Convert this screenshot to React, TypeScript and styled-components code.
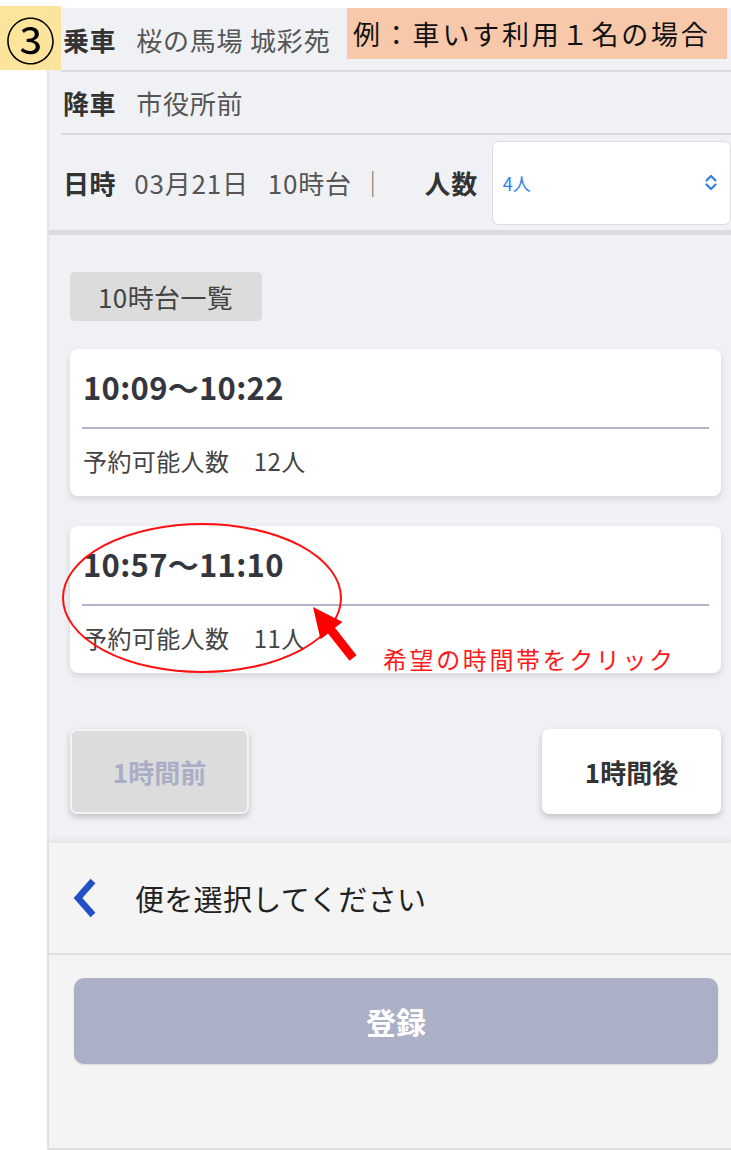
import styled, { createGlobalStyle } from "styled-components";

const GlobalStyle = createGlobalStyle`
  body {
    margin: 0;
    background: #fff;
    font-family: "Noto Sans CJK JP", "Noto Sans", sans-serif;
  }
`;

const Page = styled.div`
  position: relative;
  width: 731px;
  height: 1150px;
  overflow: hidden;
  background: #fff;
`;

const Phone = styled.div`
  margin: 8px 0 0 47px;
  height: 1142px;
  display: flex;
  flex-direction: column;
  border-left: 2px solid #e4e4e6;
  box-sizing: border-box;
`;

const Header = styled.div`
  background: #f0f1f5;
  border-bottom: 5px solid #dcdcdf;
`;

const InfoRow = styled.div<{ $height: number; $divider?: boolean }>`
  display: flex;
  align-items: center;
  height: ${(p) => p.$height}px;
  margin-left: 12px;
  padding-left: 2px;
  border-bottom: ${(p) => (p.$divider ? "2px solid #d9d9de" : "none")};
`;

const Label = styled.span<{ $gap?: number }>`
  font-size: 26px;
  letter-spacing: 0.6px;
  font-weight: 700;
  color: #333;
  margin-left: ${(p) => p.$gap ?? 0}px;
  white-space: nowrap;
`;

const Value = styled.span<{ $gap?: number; $muted?: boolean }>`
  font-size: 26px;
  letter-spacing: 0.8px;
  color: ${(p) => (p.$muted ? "#777" : "#555")};
  margin-left: ${(p) => p.$gap ?? 0}px;
  white-space: nowrap;
`;

const SelectBox = styled.div`
  margin-left: 14px;
  width: 239px;
  height: 84px;
  box-sizing: border-box;
  display: flex;
  align-items: center;
  justify-content: space-between;
  padding: 0 12px 0 10px;
  background: #fff;
  border: 1.5px solid #dcdcdf;
  border-radius: 7px;
  color: #2f7fe8;
  font-size: 18px;
`;

const Content = styled.div`
  background: #f0f1f5;
  padding: 37px 10px 29px 21px;
  display: flex;
  flex-direction: column;
`;

const Chip = styled.div`
  width: 192px;
  height: 49px;
  box-sizing: border-box;
  padding-left: 28px;
  display: flex;
  align-items: center;
  background: #dcdcdc;
  border-radius: 5px;
  color: #444;
  font-size: 26px;
  letter-spacing: 0.4px;
`;

const SlotList = styled.div`
  margin-top: 28px;
  display: flex;
  flex-direction: column;
  gap: 30px;
`;

const SlotCard = styled.div`
  background: #fff;
  border-radius: 8px;
  box-shadow: 0 3px 7px rgba(0, 0, 0, 0.12);
  padding: 0 12px;
`;

const SlotTime = styled.div`
  padding: 20px 0 22px 1px;
  line-height: 36px;
  font-size: 31px;
  letter-spacing: 0.3px;
  font-weight: 700;
  color: #33363d;
  border-bottom: 2px solid #b3b4cb;
`;

const SlotSeats = styled.div`
  padding: 17px 0 20px 1px;
  line-height: 30px;
  font-size: 24px;
  letter-spacing: 0.4px;
  color: #444;
`;

const PagerRow = styled.div`
  margin-top: 56px;
  display: flex;
  justify-content: space-between;
`;

const PagerButton = styled.div<{ $disabled?: boolean }>`
  width: 179px;
  height: 85px;
  box-sizing: border-box;
  display: flex;
  align-items: center;
  justify-content: center;
  border-radius: 7px;
  font-size: 26px;
  font-weight: 700;
  background: ${(p) => (p.$disabled ? "#dcdcdc" : "#fff")};
  color: ${(p) => (p.$disabled ? "#a9aec6" : "#333")};
  border: ${(p) => (p.$disabled ? "2px solid #f4f4f4" : "none")};
  box-shadow: 0 3px 6px rgba(0, 0, 0, 0.2);
`;

const Sheet = styled.div`
  flex: 1;
  background: #f4f4f4;
  box-shadow: 0 -4px 6px rgba(0, 0, 0, 0.05);
  border-bottom: 2px solid #dedede;
  display: flex;
  flex-direction: column;
`;

const NavRow = styled.div`
  height: 110px;
  display: flex;
  align-items: center;
  gap: 38px;
  padding-left: 22px;
  border-bottom: 2px solid #e0e0e0;
`;

const NavTitle = styled.span`
  font-size: 29px;
  letter-spacing: 0.3px;
  color: #222;
`;

const SubmitButton = styled.div`
  margin: 23px 13px 0 25px;
  height: 86px;
  display: flex;
  align-items: center;
  justify-content: center;
  background: #abb0c6;
  border-radius: 10px;
  box-shadow: 0 1px 2px rgba(0, 0, 0, 0.12);
  color: #fff;
  font-size: 30px;
  font-weight: 700;
`;

const StepBadge = styled.div`
  position: absolute;
  left: 0;
  top: 6px;
  width: 61px;
  height: 64px;
  display: flex;
  align-items: center;
  justify-content: center;
  background: #fde49c;
  color: #000;
  font-size: 50px;
  line-height: 1;
`;

const ExampleNote = styled.div`
  position: absolute;
  left: 347px;
  top: 8px;
  width: 380px;
  height: 51px;
  box-sizing: border-box;
  padding-left: 6px;
  display: flex;
  align-items: center;
  background: #f7c9aa;
  color: #111;
  font-size: 27px;
  letter-spacing: 2.8px;
  white-space: nowrap;
`;

const HintText = styled.div`
  position: absolute;
  left: 383px;
  top: 641px;
  color: #ff1a1a;
  font-size: 24px;
  letter-spacing: 2.6px;
  white-space: nowrap;
`;

const Overlay = styled.svg`
  position: absolute;
  left: 0;
  top: 0;
  pointer-events: none;
`;

const UpDownIcon = () => (
  <svg width="14" height="17" viewBox="0 0 14 17" fill="none" stroke="#2f7fe8" strokeWidth="2.2" strokeLinecap="round" strokeLinejoin="round">
    <path d="M2.5 6.5 L7 2 L11.5 6.5" />
    <path d="M2.5 10.5 L7 15 L11.5 10.5" />
  </svg>
);

const BackIcon = () => (
  <svg width="26" height="40" viewBox="0 0 26 40" fill="none" stroke="#2350c8" strokeWidth="6.5" strokeLinejoin="miter">
    <path d="M22 3 L7 20 L22 37" />
  </svg>
);

const slots = [
  { time: "10:09〜10:22", seats: "12人" },
  { time: "10:57〜11:10", seats: "11人" },
];

export default function App() {
  return (
    <>
      <GlobalStyle />
      <Page>
        <Phone>
          <Header>
            <InfoRow $height={62} $divider>
              <Label>乗車</Label>
              <Value $gap={20}>桜の馬場 城彩苑</Value>
            </InfoRow>
            <InfoRow $height={61} $divider>
              <Label>降車</Label>
              <Value $gap={20}>市役所前</Value>
            </InfoRow>
            <InfoRow $height={95}>
              <Label>日時</Label>
              <Value $gap={18}>03月21日</Value>
              <Value $gap={19}>10時台</Value>
              <Value $gap={8} $muted>｜</Value>
              <Label $gap={38}>人数</Label>
              <SelectBox>
                <span>4人</span>
                <UpDownIcon />
              </SelectBox>
            </InfoRow>
          </Header>

          <Content>
            <Chip>10時台一覧</Chip>
            <SlotList>
              {slots.map((s) => (
                <SlotCard key={s.time}>
                  <SlotTime>{s.time}</SlotTime>
                  <SlotSeats>予約可能人数　{s.seats}</SlotSeats>
                </SlotCard>
              ))}
            </SlotList>
            <PagerRow>
              <PagerButton $disabled>1時間前</PagerButton>
              <PagerButton>1時間後</PagerButton>
            </PagerRow>
          </Content>

          <Sheet>
            <NavRow>
              <BackIcon />
              <NavTitle>便を選択してください</NavTitle>
            </NavRow>
            <SubmitButton>登録</SubmitButton>
          </Sheet>
        </Phone>

        <StepBadge>③</StepBadge>
        <ExampleNote>例：車いす利用１名の場合</ExampleNote>
        <HintText>希望の時間帯をクリック</HintText>
        <Overlay width="731" height="1150" viewBox="0 0 731 1150">
          <ellipse cx="202" cy="598" rx="139" ry="74" fill="none" stroke="#ff1010" strokeWidth="2" />
          <polygon
            points="313,607 342.5,622 335,627.8 356.5,655.2 349.5,660.8 328,633.4 320.5,639.2"
            fill="#ff0000"
          />
        </Overlay>
      </Page>
    </>
  );
}
